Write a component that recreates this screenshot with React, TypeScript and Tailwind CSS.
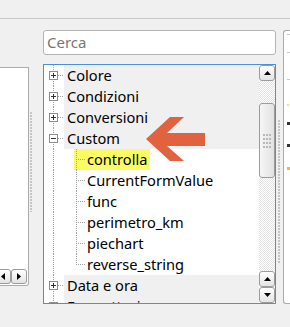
import React from "react";

type TreeNode = { name: string; open?: boolean; children?: string[] };

const tree: TreeNode[] = [
  { name: "Colore" },
  { name: "Condizioni" },
  { name: "Conversioni" },
  {
    name: "Custom",
    open: true,
    children: ["controlla", "CurrentFormValue", "func", "perimetro_km", "piechart", "reverse_string"],
  },
  { name: "Data e ora" },
  { name: "Formattazione" },
];

const DOT = "#a0a0a0";

const Triangle = ({ dir }: { dir: "up" | "down" | "left" | "right" }) => {
  const pts: Record<string, string> = {
    up: "0,4 7,4 3.5,0",
    down: "0,0 7,0 3.5,4",
    left: "4,0 4,7 0,3.5",
    right: "0,0 0,7 4,3.5",
  };
  const horiz = dir === "up" || dir === "down";
  return (
    <svg width={horiz ? 7 : 4} height={horiz ? 4 : 7}>
      <polygon points={pts[dir]} fill="#000" />
    </svg>
  );
};

const ScrollBtn = ({ dir, className = "" }: { dir: "up" | "down" | "left" | "right"; className?: string }) => (
  <div
    className={`flex items-center justify-center rounded-[3px] border border-[#9c9c9c] bg-linear-to-b from-white to-[#e4e4e4] ${className}`}
  >
    <Triangle dir={dir} />
  </div>
);

const RootGutter = ({ open }: { open?: boolean }) => (
  <svg width={20} height={21} className="shrink-0" shapeRendering="crispEdges">
    <line x1={9.5} y1={0} x2={9.5} y2={21} stroke={DOT} strokeDasharray="1 1" />
    <line x1={14} y1={10.5} x2={20} y2={10.5} stroke={DOT} strokeDasharray="1 1" />
    <rect x={5.5} y={6.5} width={8} height={8} fill="#fff" stroke="#8e8e8e" />
    <line x1={7} y1={10.5} x2={12} y2={10.5} stroke="#333" />
    {!open && <line x1={9.5} y1={8} x2={9.5} y2={13} stroke="#333" />}
  </svg>
);

const RootRow = ({ node }: { node: TreeNode }) => (
  <div className="flex h-[21px] shrink-0">
    <RootGutter open={node.open} />
    <div className="flex-1 bg-[#f0f0f0] pl-[3px] leading-[21px] whitespace-nowrap">{node.name}</div>
  </div>
);

const ChildRow = ({ name, last, hi }: { name: string; last: boolean; hi: boolean }) => (
  <div className="flex h-[21px] shrink-0 bg-white">
    <svg width={30} height={21} className="shrink-0" shapeRendering="crispEdges">
      <line x1={9.5} y1={0} x2={9.5} y2={21} stroke={DOT} strokeDasharray="1 1" />
    </svg>
    <div className={`flex h-[21px] pr-[3px] ${hi ? "bg-[#fbfb66]" : ""}`}>
      <svg width={13} height={21} className="shrink-0" shapeRendering="crispEdges">
        <line x1={2.5} y1={0} x2={2.5} y2={last ? 11 : 21} stroke={DOT} strokeDasharray="1 1" />
        <line x1={2} y1={10.5} x2={11} y2={10.5} stroke={DOT} strokeDasharray="1 1" />
      </svg>
      <span className="leading-[21px] whitespace-nowrap">{name}</span>
    </div>
  </div>
);

const Grip = ({ className }: { className: string }) => (
  <div
    className={`w-[2px] bg-[repeating-linear-gradient(to_bottom,#c6c6c6_0px,#c6c6c6_2px,transparent_2px,transparent_3px)] ${className}`}
  />
);

export default function App() {
  return (
    <div className="relative h-[327px] w-[290px] overflow-hidden bg-[#f0f0f0] font-['Noto_Sans',sans-serif] text-[14.6px] text-black">
      <div className="h-[19px] border-b border-[#c8c8c8]" />

      <div className="flex items-start">
        {/* left panel */}
        <div className="mt-[48px] flex h-[219px] w-[29px] shrink-0 flex-col rounded-br-[3px] border-t border-r border-b border-[#acacac] bg-white">
          <div className="flex-1" />
          <div className="flex h-[16px] pb-px">
            <ScrollBtn dir="left" className="-ml-[5px] w-[16px]" />
            <ScrollBtn dir="right" className="w-[16px]" />
          </div>
        </div>

        <div className="w-[14px] shrink-0">
          <Grip className="mt-[93px] ml-px h-[100px]" />
        </div>

        {/* center column */}
        <div className="flex w-[233px] shrink-0 flex-col pt-[11px]">
          <div className="flex h-[25px] items-center rounded-[3px] border border-[#b4b4b4] bg-white pl-[3px] text-[15px] text-[#777]">
            Cerca
          </div>
          <div className="mt-[9px] flex h-[240px] border border-[#4a90e2] bg-white">
            <div className="flex flex-1 flex-col overflow-hidden">
              {tree.map((n) => (
                <React.Fragment key={n.name}>
                  <RootRow node={n} />
                  {n.open &&
                    n.children?.map((c, i) => (
                      <ChildRow key={c} name={c} last={i === (n.children?.length ?? 0) - 1} hi={c === "controlla"} />
                    ))}
                </React.Fragment>
              ))}
            </div>
            <div className="flex w-[16px] shrink-0 flex-col">
              <ScrollBtn dir="up" className="h-[16px]" />
              <div className="h-[22px] bg-[repeating-conic-gradient(#e2e2e2_0%_25%,#ffffff_0%_50%)] bg-[length:2px_2px]" />
              <div className="flex h-[75px] items-center justify-center rounded-[3px] border border-[#9c9c9c] bg-linear-to-r from-[#f6f6f6] to-[#e2e2e2]">
                <svg width={10} height={16} shapeRendering="crispEdges">
                  {[0, 1, 2].map((cx) =>
                    [0, 1, 2, 3].map((cy) => (
                      <rect key={`${cx}-${cy}`} x={1 + cx * 3} y={1 + cy * 4} width={2} height={2} fill="#b8b8b8" />
                    ))
                  )}
                </svg>
              </div>
              <div className="flex-1 bg-[repeating-conic-gradient(#e2e2e2_0%_25%,#ffffff_0%_50%)] bg-[length:2px_2px]" />
              <ScrollBtn dir="up" className="h-[16px]" />
              <ScrollBtn dir="down" className="h-[16px]" />
            </div>
          </div>
        </div>

        <div className="w-[7px] shrink-0">
          <Grip className="mt-[101px] ml-[2px] h-[143px]" />
        </div>

        {/* right panel */}
        <div className="mt-[11px] flex h-[274px] flex-1 flex-col rounded-l-[3px] border-t border-b border-l border-[#acacac] bg-white pl-[3px]">
          <div className="mt-[3px] h-px w-[3px] bg-[#c8c8c8]" />
          <div className="mt-[17px] h-px w-[3px] bg-[#c8c8c8]" />
          <div className="mt-[26px] h-px w-[3px] bg-[#c8c8c8]" />
          <div className="mt-[24px] h-[2px] w-[2px] bg-[#f3e27a]" />
          <div className="mt-[16px] h-[3px] w-[3px] bg-[#333]" />
          <div className="mt-[19px] h-[3px] w-[3px] bg-[#333]" />
          <div className="mt-[20px] h-[3px] w-[3px] bg-[#e9b85a]" />
        </div>
      </div>

      {/* annotation arrow */}
      <svg className="pointer-events-none absolute top-0 left-0" width={290} height={327}>
        <polygon
          points="146,139 170,117 184,117 167,133 205,133 205,146 167,146 184,161 170,161"
          fill="#e0623f"
        />
      </svg>
    </div>
  );
}
